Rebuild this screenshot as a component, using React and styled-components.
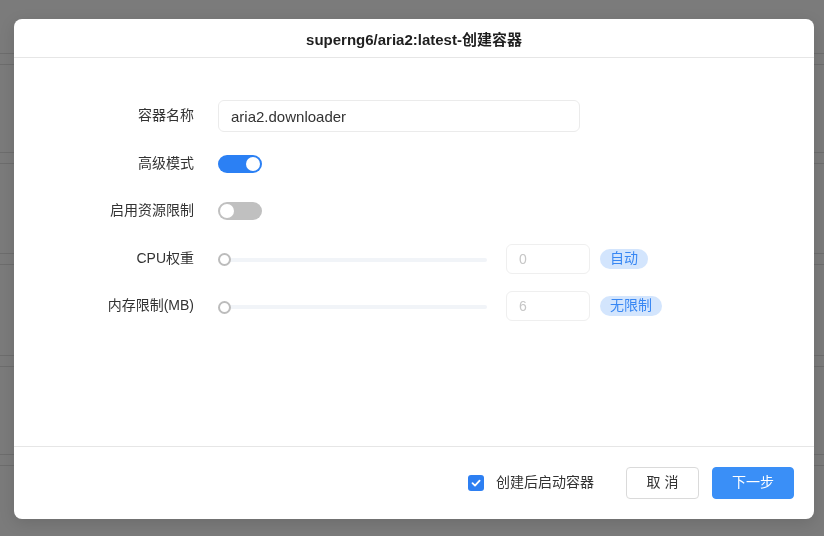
import React from "react";
import styled, { createGlobalStyle } from "styled-components";

const Global = createGlobalStyle`
  html, body { margin: 0; padding: 0; }
  body {
    font-family: "Liberation Sans", "Noto Sans CJK SC", sans-serif;
    background: #7b7b7b;
    overflow: hidden;
  }
`;

const Page = styled.div`
  height: 536px;
  background: #7b7b7b;
  display: flex;
  flex-direction: column;
`;

const BgRow = styled.div`
  height: ${(p) => p.$h}px;
  flex: none;
`;

const BgBand = styled.div`
  height: 10px;
  flex: none;
  border-top: 1px solid #6d6d6d;
  border-bottom: 1px solid #6d6d6d;
`;

const Overlay = styled.div`
  position: fixed;
  inset: 0;
  display: flex;
  align-items: center;
  justify-content: center;
  padding: 2px 0 0 4px;
`;

const Modal = styled.div`
  width: 800px;
  height: 500px;
  background: #fff;
  border-radius: 8px;
  box-shadow: 0 4px 16px rgba(0, 0, 0, 0.12);
  display: flex;
  flex-direction: column;
  overflow: hidden;
`;

const Header = styled.div`
  height: 38px;
  flex: none;
  border-bottom: 1px solid #e6e6e6;
  display: flex;
  align-items: center;
  justify-content: center;
  font-size: 15px;
  font-weight: bold;
  color: #1f1f1f;
`;

const Body = styled.div`
  flex: 1;
  padding-top: 42px;
  display: flex;
  flex-direction: column;
  gap: 15.5px;
`;

const Row = styled.div`
  display: grid;
  grid-template-columns: 180px auto;
  column-gap: 24px;
  align-items: center;
  height: 32px;
`;

const Label = styled.div`
  text-align: right;
  font-size: 14px;
  line-height: 20px;
  padding-bottom: 2px;
  color: #333;
  white-space: nowrap;
`;

const Controls = styled.div`
  display: flex;
  align-items: center;
`;

const TextInput = styled.div`
  width: 362px;
  height: 32px;
  box-sizing: border-box;
  border: 1px solid #ebebeb;
  border-radius: 6px;
  padding: 0 12px;
  display: flex;
  align-items: center;
  font-size: 15px;
  color: #333;
`;

const Switch = styled.div`
  width: 44px;
  height: 18px;
  border-radius: 9px;
  background: ${(p) => (p.$on ? "#2b80f4" : "#c0c0c0")};
  position: relative;
  &::after {
    content: "";
    position: absolute;
    top: 2px;
    ${(p) => (p.$on ? "right: 2px;" : "left: 2px;")}
    width: 14px;
    height: 14px;
    border-radius: 50%;
    background: #fff;
  }
`;

const Slider = styled.div`
  width: 269px;
  height: 14px;
  position: relative;
  display: flex;
  align-items: center;
  margin-top: 2px;
`;

const Track = styled.div`
  position: absolute;
  left: 6px;
  right: 0;
  height: 4px;
  top: 5px;
  border-radius: 2px;
  background: #f1f4f8;
`;

const Handle = styled.div`
  position: relative;
  width: 13px;
  height: 13px;
  box-sizing: border-box;
  border-radius: 50%;
  border: 2px solid #bcbcbc;
  background: #fff;
`;

const NumBox = styled.div`
  margin-left: 19px;
  width: 84px;
  height: 30px;
  box-sizing: border-box;
  border: 1px solid #efefef;
  border-radius: 6px;
  padding: 0 12px;
  display: flex;
  align-items: center;
  font-size: 14px;
  color: #c6c6c6;
`;

const Pill = styled.div`
  margin-left: 10px;
  height: 20px;
  padding: 0 10px;
  border-radius: 10px;
  background: #d3e5fd;
  color: #3887f3;
  font-size: 14px;
  line-height: 18px;
  display: flex;
  align-items: center;
  box-sizing: border-box;
  padding-bottom: 2px;
`;

const Footer = styled.div`
  height: 72px;
  flex: none;
  border-top: 1px solid #e6e6e6;
  display: flex;
  align-items: center;
  justify-content: flex-end;
  padding-right: 20px;
`;

const CheckWrap = styled.label`
  display: flex;
  align-items: center;
  gap: 12px;
  font-size: 14px;
  line-height: 18px;
  color: #333;
  margin-right: 32px;
`;

const CheckText = styled.span`
  padding-bottom: 2px;
`;

const CheckBox = styled.span`
  width: 16px;
  height: 16px;
  border-radius: 3px;
  background: #2d7ff2;
  display: flex;
  align-items: center;
  justify-content: center;
`;

const Button = styled.button`
  height: 32px;
  width: ${(p) => p.$w}px;
  box-sizing: border-box;
  border-radius: 4px;
  font-family: inherit;
  font-size: 14px;
  line-height: 18px;
  margin-left: ${(p) => p.$ml || 0}px;
  border: 1px solid ${(p) => (p.$primary ? "#3a8ff7" : "#dadada")};
  background: ${(p) => (p.$primary ? "#3a8ff7" : "#fff")};
  color: ${(p) => (p.$primary ? "#fff" : "#333")};
  padding: 0 0 2px;
  cursor: pointer;
`;

function SliderRow({ label, value, pill }) {
  return (
    <Row>
      <Label>{label}</Label>
      <Controls>
        <Slider>
          <Track />
          <Handle />
        </Slider>
        <NumBox>{value}</NumBox>
        <Pill>{pill}</Pill>
      </Controls>
    </Row>
  );
}

export default function App() {
  return (
    <>
      <Global />
      <Page>
        <BgRow $h={53} />
        <BgBand />
        <BgRow $h={87} />
        <BgBand />
        <BgRow $h={89} />
        <BgBand />
        <BgRow $h={90} />
        <BgBand />
        <BgRow $h={87} />
        <BgBand />
      </Page>
      <Overlay>
        <Modal>
          <Header>superng6/aria2:latest-创建容器</Header>
          <Body>
            <Row>
              <Label>容器名称</Label>
              <Controls>
                <TextInput>aria2.downloader</TextInput>
              </Controls>
            </Row>
            <Row>
              <Label>高级模式</Label>
              <Controls>
                <Switch $on />
              </Controls>
            </Row>
            <Row>
              <Label>启用资源限制</Label>
              <Controls>
                <Switch />
              </Controls>
            </Row>
            <SliderRow label="CPU权重" value="0" pill="自动" />
            <SliderRow label="内存限制(MB)" value="6" pill="无限制" />
          </Body>
          <Footer>
            <CheckWrap>
              <CheckBox>
                <svg width="12" height="12" viewBox="0 0 12 12">
                  <path d="M2.5 6.2 L5 8.6 L9.6 3.6" fill="none" stroke="#fff" strokeWidth="1.8" strokeLinecap="round" strokeLinejoin="round" />
                </svg>
              </CheckBox>
              <CheckText>创建后启动容器</CheckText>
            </CheckWrap>
            <Button $w={73}>取 消</Button>
            <Button $w={82} $ml={13} $primary>下一步</Button>
          </Footer>
        </Modal>
      </Overlay>
    </>
  );
}
